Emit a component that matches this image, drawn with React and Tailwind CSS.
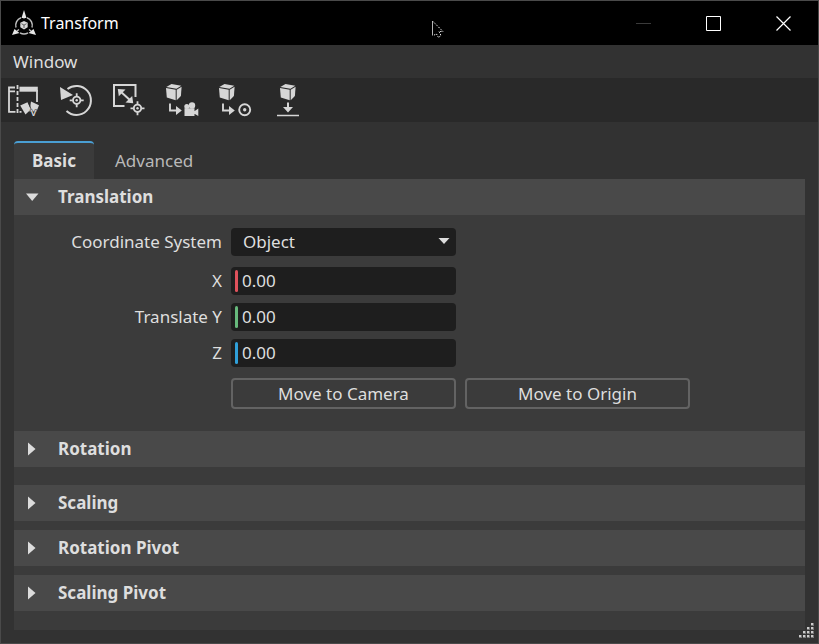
import * as React from "react";

const AXES = [
  { id: "x", label: "X", bar: "bg-[#e0525c]" },
  { id: "y", label: "Translate Y", bar: "bg-[#67b97c]" },
  { id: "z", label: "Z", bar: "bg-[#2f9fd8]" },
];

function Logo() {
  return (
    <svg width="26" height="28" viewBox="0 0 26 28" aria-hidden="true">
      <g fill="none" stroke="#bdbdbd" strokeWidth="1.500">
        <path d="M10 8.800A8 8 0 0 0 5 18.500M16 8.800A8 8 0 0 1 21 18.500M9 23.800A8 8 0 0 0 17 23.800" />
        <path d="M13 6v3.500M8 20.500l-2 1.500M18 20.500l2 1.500" />
      </g>
      <path
        d="M13 1l2.500 8h-5zM1 26l2.500-6 5 4zM25 26l-2.500-6-5 4z"
        fill="#e6e6e6"
      />
      <path d="M13 12l3.700 1.800v4.400L13 20.500l-3.700-2.300v-4.400z" fill="#d8d8d8" />
      <path
        d="M10.500 14.700l2.500 1.400 2.500-1.400M13 16v3"
        stroke="#444"
        strokeWidth="0.800"
        fill="none"
      />
    </svg>
  );
}

function Cursor() {
  return (
    <svg width="12" height="18" viewBox="0 0 12 18" aria-hidden="true">
      <path d="M0.500 0v14.500" stroke="#b5b5b5" fill="none" />
      <path
        d="M1 0.500L11 10.500H7l2 4-2.500 2-2-3.500L1 14.500"
        stroke="#eee"
        strokeDasharray="1.400 1.200"
        fill="#000"
      />
    </svg>
  );
}

function Cube({ x = 1 }) {
  return (
    <g transform={`translate(${x} 2)`} fill="#d6d6d6">
      <path d="M5.500 0L15.300 1.800 10.500 4.700 0.300 3z" />
      <path d="M0 4l9.700 1.700V16.300L0.800 13.500z" />
      <path d="M10.700 5.700L15.600 2.700l-0.700 9.300-4.200 4.200z" />
    </g>
  );
}

function Target({ x, y }) {
  return (
    <g transform={`translate(${x} ${y})`}>
      <circle r="3.700" fill="none" stroke="#d6d6d6" strokeWidth="1.900" />
      <circle r="1.200" fill="#d6d6d6" />
      <path
        d="M0-7v3M0 4v3M-7 0h3M4 0h3"
        stroke="#d6d6d6"
        strokeWidth="1.800"
      />
    </g>
  );
}

function StepArrow() {
  return (
    <>
      <path d="M5 21.500v7h8" fill="none" stroke="#d6d6d6" strokeWidth="1.900" />
      <path d="M11 24l5.800 4.500L11 33z" fill="#d6d6d6" />
    </>
  );
}

const TOOLS = [
  {
    name: "Flip UVs",
    icon: (
      <>
        <g fill="none" stroke="#d6d6d6" strokeWidth="1.800">
          <path d="M9 5.500H3v24.300h6.500M3 9.300h6" />
          <path d="M11.500 3v30" strokeDasharray="4 2" />
          <path d="M31 8v12M13.500 29.800h2" />
        </g>
        <path d="M13.500 4.700h18.300v5H13.500z" fill="#d6d6d6" />
        <path d="M14.200 23.500l7.300-3.300 3.300 7.300-5.300 5z" fill="#d6d6d6" />
        <path d="M25 19.500l8 3.700-2.500 6.300h-7z" fill="#d6d6d6" />
        <path d="M22.500 20.500l2.500 6.500" stroke="#292929" strokeWidth="0.800" />
        <text
          x="24.500"
          y="34"
          fontSize="9"
          fontWeight="700"
          fontFamily="Liberation Sans, sans-serif"
          fill="#d6d6d6"
          stroke="#292929"
          strokeWidth="1"
          paintOrder="stroke"
        >
          V
        </text>
      </>
    ),
  },
  {
    name: "Reset transform",
    icon: (
      <>
        <path
          d="M7.500 29A14.500 14.500 0 1 0 8.500 7"
          fill="none"
          stroke="#d6d6d6"
          strokeWidth="2"
        />
        <path d="M1 5l13 8L2 18z" fill="#d6d6d6" />
        <Target x={17.7} y={18.3} />
      </>
    ),
  },
  {
    name: "Scale to pivot",
    icon: (
      <>
        <path
          d="M12.500 24H2V3h21.500v12"
          fill="none"
          stroke="#d6d6d6"
          strokeWidth="2"
        />
        <path d="M8 9l11.500 10.500" stroke="#d6d6d6" strokeWidth="2" />
        <path
          d="M5.800 7l7.700 0.600-6.700 6.600zM21.200 21.200l-7.700-0.600 6.700-6.600z"
          fill="#d6d6d6"
        />
        <Target x={25.5} y={26.3} />
      </>
    ),
  },
  {
    name: "Move to camera",
    icon: (
      <>
        <Cube />
        <StepArrow />
        <g fill="#d6d6d6">
          <circle cx="21.800" cy="24.500" r="2.500" />
          <circle cx="27" cy="23.500" r="3.200" />
          <path d="M19.500 26.300h10v7.700h-10zM29 29.500l4.300-3v7.400L29 31.500z" />
        </g>
      </>
    ),
  },
  {
    name: "Move to origin",
    icon: (
      <>
        <Cube />
        <StepArrow />
        <circle
          cx="26.700"
          cy="27.700"
          r="5.500"
          fill="none"
          stroke="#d6d6d6"
          strokeWidth="1.900"
        />
        <circle cx="26.700" cy="27.700" r="1.700" fill="#d6d6d6" />
      </>
    ),
  },
  {
    name: "Drop to floor",
    icon: (
      <>
        <Cube x={9} />
        <path d="M17 20.500v6" stroke="#d6d6d6" strokeWidth="2" />
        <path d="M6 32.700h22v1.600H6zM12 25h10l-5 5.500z" fill="#d6d6d6" />
      </>
    ),
  },
];

function Section({ title, open, onToggle, children }) {
  return (
    <section>
      <button
        type="button"
        aria-expanded={open}
        onClick={onToggle}
        className="flex h-9 w-full items-center bg-[#494949] text-left font-bold"
      >
        <span className="flex w-11 items-center pl-3">
          <svg width="14" height="14" viewBox="0 0 14 14" aria-hidden="true">
            <path
              d={open ? "M0 3.500h12.500L6.200 11z" : "M2 0.500v13L9.500 7z"}
              fill="#dcdcdc"
            />
          </svg>
        </span>
        {title}
      </button>
      {open && children}
    </section>
  );
}

export default function TransformWindow() {
  const [tab, setTab] = React.useState("Basic");
  const [open, setOpen] = React.useState({ Translation: true });
  const [system, setSystem] = React.useState("Object");
  const [values, setValues] = React.useState({
    x: "0.00",
    y: "0.00",
    z: "0.00",
  });

  const section = (title) => ({
    title,
    open: !!open[title],
    onToggle: () => setOpen({ ...open, [title]: !open[title] }),
  });

  return (
    <div className="relative flex min-h-screen flex-col border border-[#4a4a4a] bg-[#323232] font-['Noto_Sans','Open_Sans',sans-serif] text-[17px] leading-6 text-[#dedede]">
      <header className="relative flex h-11 items-center bg-black pl-2.5 text-white">
        <Logo />
        <h1 className="ml-1 flex-1 text-base">Transform</h1>
        <button
          type="button"
          aria-label="Minimize"
          className="flex h-full w-[70px] items-center justify-center"
        >
          <svg width="15" height="15" viewBox="0 0 15 15">
            <path d="M0 7.500h15" stroke="#3a3a3a" />
          </svg>
        </button>
        <button
          type="button"
          aria-label="Maximize"
          className="flex h-full w-[70px] items-center justify-center"
        >
          <svg width="15" height="15" viewBox="0 0 15 15">
            <path d="M0.500 0.500h14v14h-14z" fill="none" stroke="#fff" />
          </svg>
        </button>
        <button
          type="button"
          aria-label="Close"
          className="flex h-full w-[70px] items-center justify-center"
        >
          <svg width="15" height="15" viewBox="0 0 15 15">
            <path
              d="M0.500 0.500l14 14M14.500 0.500l-14 14"
              stroke="#fff"
              strokeWidth="1.200"
            />
          </svg>
        </button>
        <div className="pointer-events-none absolute left-[431px] top-5">
          <Cursor />
        </div>
      </header>

      <nav className="flex h-[33px] items-center px-3">
        <button type="button">Window</button>
      </nav>

      <div className="flex h-11 items-center gap-[17px] bg-[#292929] px-[5px]">
        {TOOLS.map((tool) => (
          <button key={tool.name} type="button" aria-label={tool.name}>
            <svg width="36" height="36" viewBox="0 0 36 36" className="block">
              {tool.icon}
            </svg>
          </button>
        ))}
      </div>

      <main className="flex flex-1 flex-col px-[13px] pt-[19px] pb-[13px]">
        <div role="tablist" className="flex">
          {["Basic", "Advanced"].map((name) => (
            <button
              key={name}
              type="button"
              role="tab"
              aria-selected={tab === name}
              onClick={() => setTab(name)}
              className={
                tab === name
                  ? "h-[38px] w-20 rounded-t border-t-2 border-[#4a9fd4] bg-[#3b3b3b] font-bold"
                  : "h-[38px] border-t-2 border-transparent px-[21px] text-[#b9b9b9]"
              }
            >
              {name}
            </button>
          ))}
        </div>

        <div className="flex-1 bg-[#3b3b3b]">
          <Section {...section("Translation")}>
            <div className="flex flex-col gap-2 pt-[13px] pb-[22px]">
              <div className="mb-[3px] flex items-center gap-[9px]">
                <label htmlFor="system" className="w-52 text-right">
                  Coordinate System
                </label>
                <div className="relative w-[225px]">
                  <select
                    id="system"
                    value={system}
                    onChange={(e) => setSystem(e.target.value)}
                    className="block h-7 w-full appearance-none rounded bg-[#1e1e1e] pl-3 outline-none"
                  >
                    <option>Object</option>
                    <option>World</option>
                  </select>
                  <svg
                    width="12"
                    height="7"
                    viewBox="0 0 12 7"
                    className="pointer-events-none absolute right-1.5 top-2.5"
                    aria-hidden="true"
                  >
                    <path d="M0.500 0h11L6 6z" fill="#dcdcdc" />
                  </svg>
                </div>
              </div>
              {AXES.map((axis) => (
                <div key={axis.id} className="flex items-center gap-[9px]">
                  <label htmlFor={axis.id} className="w-52 text-right">
                    {axis.label}
                  </label>
                  <div className="flex h-7 w-[225px] items-center gap-1 rounded bg-[#1e1e1e] pl-1">
                    <span className={`h-[22px] w-[3px] rounded-full ${axis.bar}`} />
                    <input
                      id={axis.id}
                      type="text"
                      value={values[axis.id]}
                      onChange={(e) =>
                        setValues({ ...values, [axis.id]: e.target.value })
                      }
                      className="h-full min-w-0 flex-1 bg-transparent pb-0.5 outline-none"
                    />
                  </div>
                </div>
              ))}
              <div className="mt-[3px] flex gap-[9px] pl-[217px]">
                <button
                  type="button"
                  className="h-[31px] w-[225px] rounded border-2 border-[#636363]"
                >
                  Move to Camera
                </button>
                <button
                  type="button"
                  className="h-[31px] w-[225px] rounded border-2 border-[#636363]"
                >
                  Move to Origin
                </button>
              </div>
            </div>
          </Section>
          <div className="flex flex-col gap-[9px]">
            <div className="pb-[9px]">
              <Section {...section("Rotation")} />
            </div>
            <Section {...section("Scaling")} />
            <Section {...section("Rotation Pivot")} />
            <Section {...section("Scaling Pivot")} />
          </div>
        </div>
      </main>

      <svg
        width="16"
        height="16"
        viewBox="0 0 16 16"
        className="absolute right-1 bottom-1"
        aria-hidden="true"
      >
        {[0, 1, 2, 3].map((row) =>
          [0, 1, 2, 3]
            .filter((col) => col >= 3 - row)
            .map((col) => (
              <g key={`${row}-${col}`}>
                <rect x={col * 4 + 1} y={row * 4} width="3" height="3" fill="#777" />
                <rect x={col * 4 + 1} y={row * 4} width="2" height="2" fill="#ccc" />
              </g>
            ))
        )}
      </svg>
    </div>
  );
}
